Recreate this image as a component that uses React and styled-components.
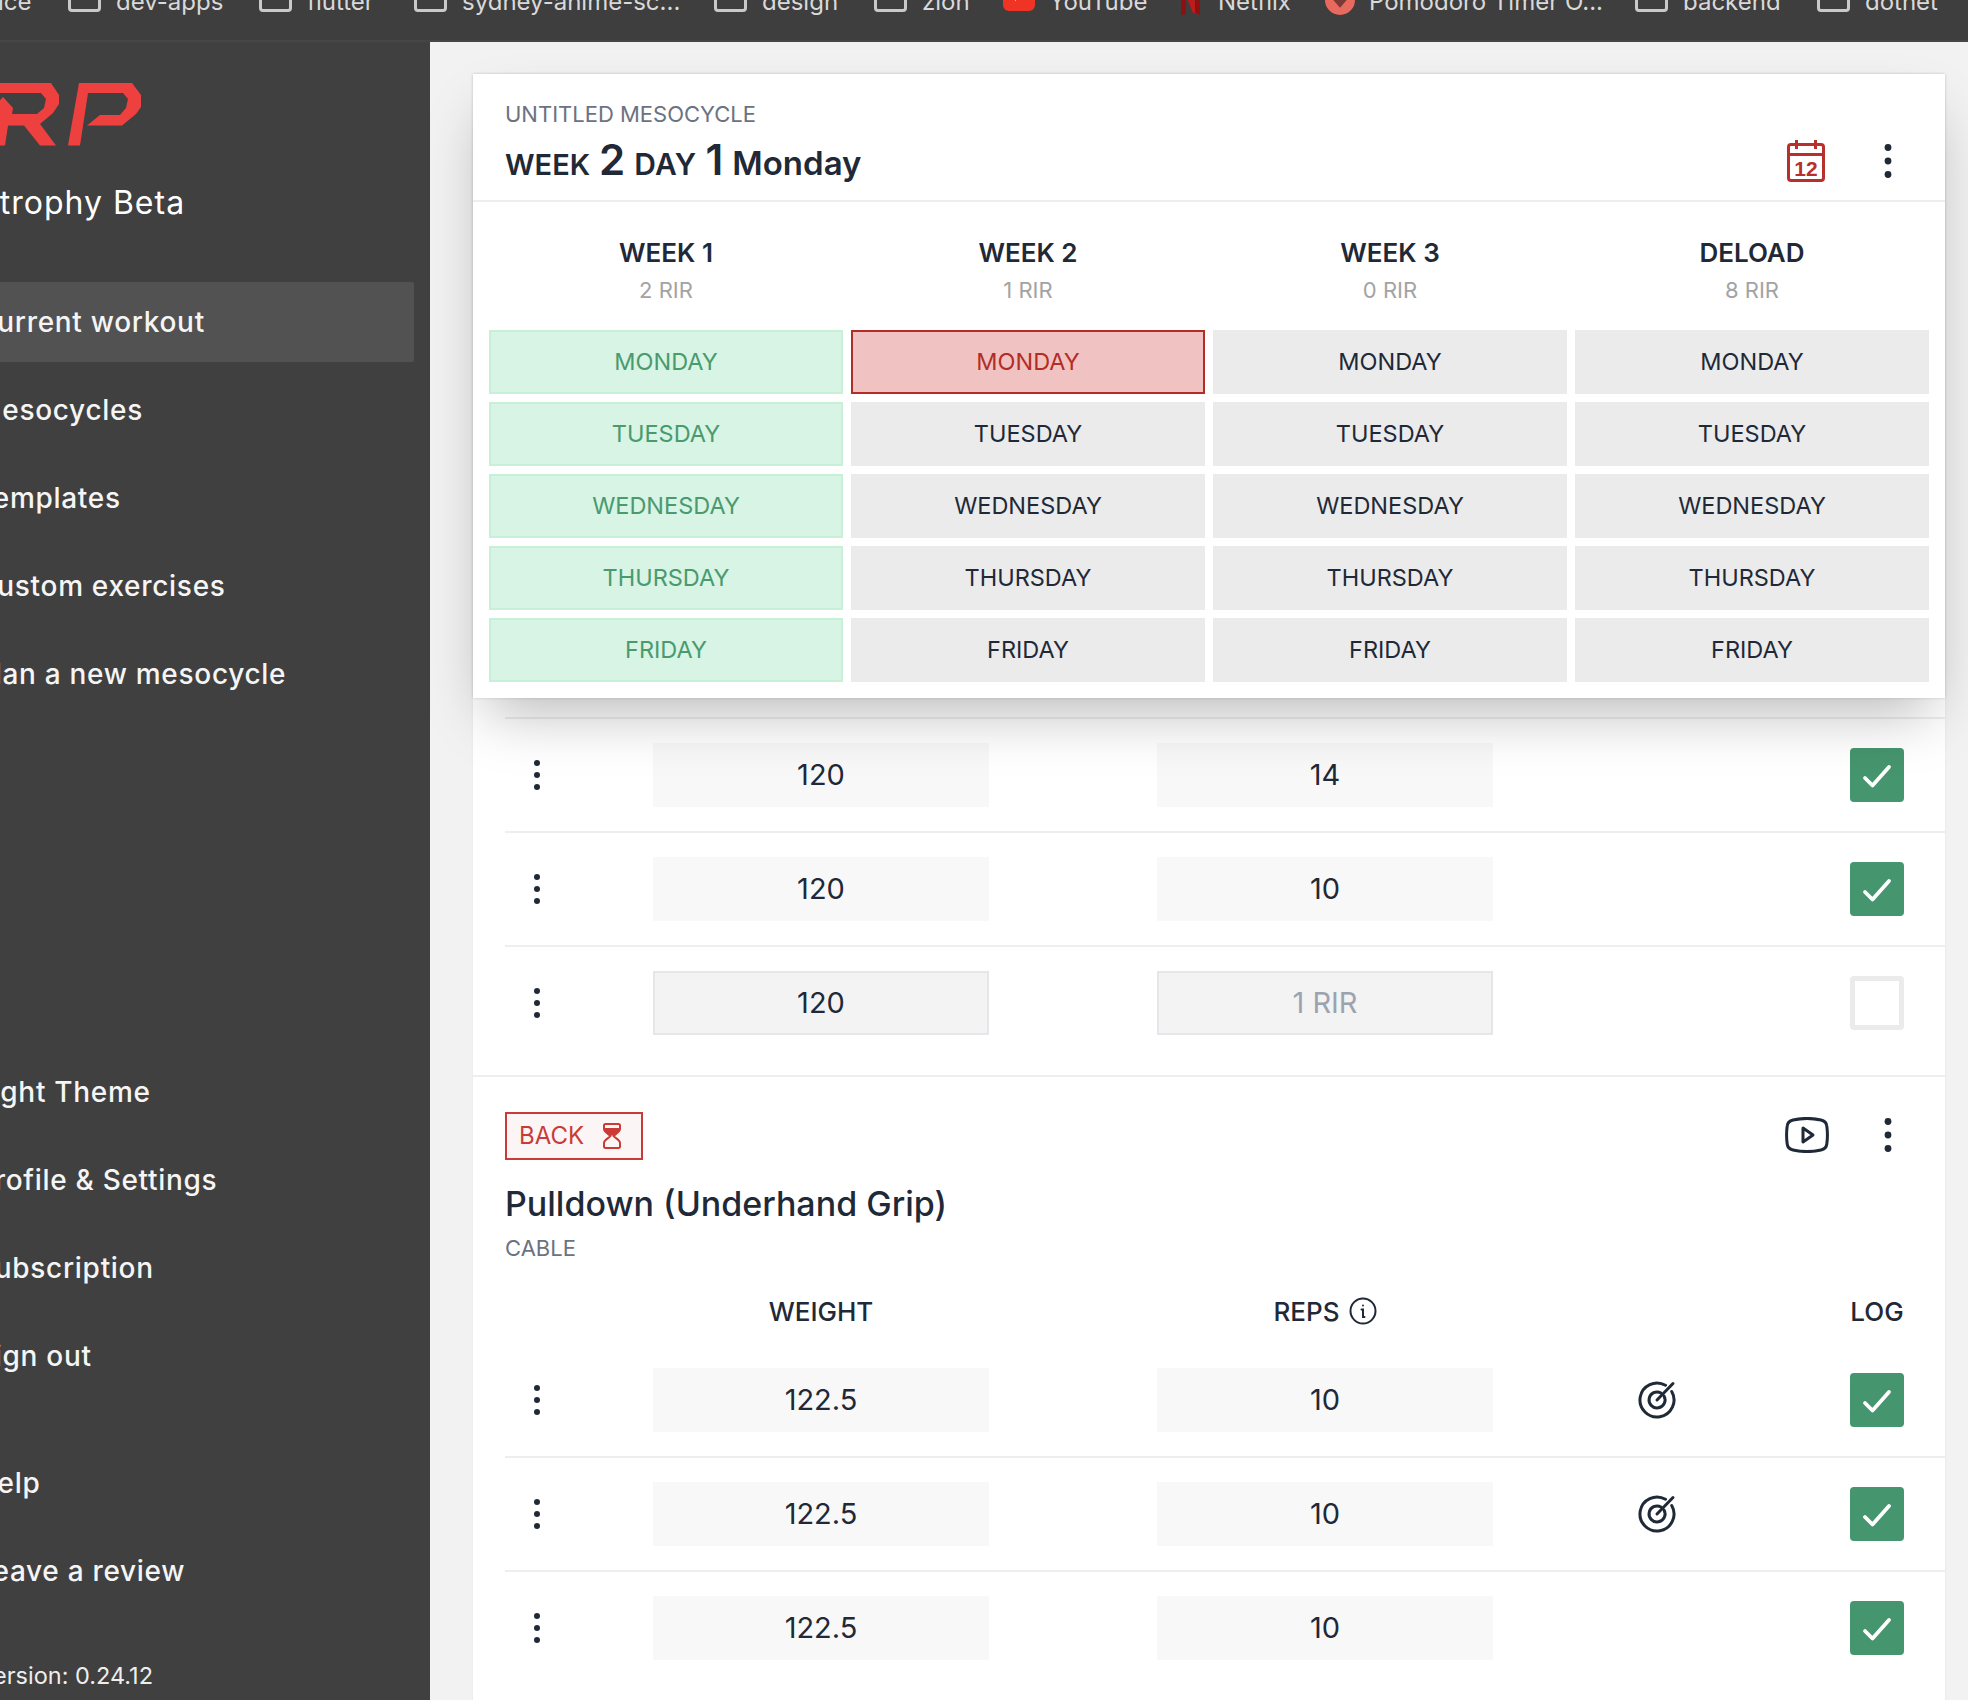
import React from "react";
import styled, { createGlobalStyle } from "styled-components";

const Global = createGlobalStyle`
  html, body { margin: 0; padding: 0; background: #f2f2f2; overflow: hidden; }
  * { box-sizing: border-box; }
  body { font-family: Inter, "Noto Sans", sans-serif; color: #1f2937; }
`;

const Page = styled.div`
  width: 1968px; height: 1700px; overflow: hidden;
  display: flex; flex-direction: column;
`;

/* ---------- bookmarks bar ---------- */
const TopBar = styled.div`
  height: 42px; flex: none; overflow: hidden;
  background: #3e3e3e; border-bottom: 2px solid #464646;
`;
const Bookmarks = styled.div`
  display: flex; align-items: flex-start; height: 32px;
  margin: -17px 0 0 -2px;
  font-size: 24px; line-height: 32px; color: #d9d9d9; white-space: nowrap;
`;
const Bookmark = styled.div`
  display: flex; align-items: flex-start; flex: none;
  width: ${(p) => p.$w}px;
`;
const BookmarkIcon = styled.div`
  flex: none; width: ${(p) => p.$w}px; margin-right: 15px; height: 29px;
`;
const BookmarkLabel = styled.span`
  padding-top: 3px;
`;
const Folder = styled.div`
  width: 33px; height: 29px;
  border: 3px solid #c9c9c9; border-radius: 4px;
`;

const Youtube = () => (
  <svg width="32" height="29" viewBox="0 0 32 29">
    <rect x="0" y="-6" width="32" height="34" rx="6" fill="#ef3324" />
    <path d="M12 10 L20 17 L12 24 Z" fill="#fff" transform="translate(0 -6)" />
  </svg>
);
const Netflix = () => (
  <svg width="22" height="32" viewBox="0 0 22 32">
    <path d="M1 0 H8 L20 32 L13 30 Z" fill="#c11a1a" />
    <path d="M1 0 H6 V31 L1 32 Z" fill="#8f1010" />
    <path d="M15 0 H20 V32 L15 30 Z" fill="#8f1010" />
  </svg>
);
const Pomodoro = () => (
  <svg width="30" height="32" viewBox="0 0 30 32">
    <circle cx="15" cy="17" r="15" fill="#e8695e" />
    <path d="M9 14 L15 21 L21 14" fill="none" stroke="#7a3a36" strokeWidth="5" />
  </svg>
);

/* ---------- sidebar ---------- */
const Layout = styled.div`
  flex: 1; display: flex; min-height: 0;
`;
const Sidebar = styled.aside`
  width: 430px; flex: none; background: #404040; color: #fff; overflow: hidden;
  display: flex; flex-direction: column; padding-top: 41px;
`;
const LogoWrap = styled.div`
  height: 64px; flex: none;
  svg { display: block; margin-top: -1px; }
`;
const Product = styled.div`
  margin: 33px 0 0 -98px; font-size: 32px; line-height: 46px; white-space: nowrap;
  letter-spacing: 1px; height: 46px;
`;
const NavGroup = styled.nav`
  display: flex; flex-direction: column; gap: 8px;
  margin-top: ${(p) => p.$top}px; width: 414px;
`;
const NavItem = styled.div`
  height: 80px; display: flex; align-items: center;
  font-size: 28px; font-weight: 500; letter-spacing: 0.7px; white-space: nowrap; color: #f5f5f5;
  background: ${(p) => (p.$active ? "#525252" : "transparent")};
  border-radius: 0 2px 2px 0;
`;
const NavText = styled.span`
  margin-left: -24px;
`;
const Version = styled.div`
  margin: 47px 0 0 -22px; font-size: 23.5px; line-height: 36px; color: #eee; white-space: nowrap;
`;

/* ---------- main ---------- */
const Main = styled.main`
  flex: 1; min-width: 0; background: #f2f2f2; padding: 32px 23px 0 43px; overflow: hidden;
`;
const Card = styled.div`
  background: #fff; min-height: 1700px;
  box-shadow: 0 0 3px rgba(0,0,0,.06);
`;
const Sticky = styled.div`
  position: relative; z-index: 2; background: #fff;
  box-shadow: 0 28px 56px -14px rgba(0,0,0,.28), 0 0 3px rgba(0,0,0,.14);
`;
const StickyHead = styled.header`
  height: 128px; border-bottom: 2px solid #eeeeee;
  display: flex; align-items: flex-end; justify-content: space-between;
  padding: 0 32px 11px;
`;
const Kicker = styled.div`
  font-size: 22px; line-height: 30px; color: #6b7280;
`;
const Heading = styled.h1`
  margin: 7px 0 0; font-weight: 600; color: #1f2937; line-height: 48px;
  display: flex; align-items: baseline; gap: 9px;
`;
const HeadingPart = styled.span`
  font-size: ${(p) => p.$size}px;
  letter-spacing: ${(p) => p.$track ?? 0}px;
`;
const HeadActions = styled.div`
  display: flex; align-items: center; gap: 58px; padding-right: 20px; padding-bottom: 7px;
`;
const WeekGrid = styled.div`
  display: grid; grid-template-columns: repeat(4, 354px); gap: 8px;
  padding: 28px 16px 16px;
`;
const WeekCol = styled.div`
  display: flex; flex-direction: column; gap: 8px;
`;
const WeekTitle = styled.div`
  text-align: center; height: 92px;
`;
const WeekName = styled.div`
  font-size: 26px; line-height: 45px; font-weight: 600; color: #1f2937;
`;
const Rir = styled.div`
  font-size: 22px; line-height: 30px; color: #a3a3a3;
`;
const variants = {
  done: "background:#d7f4e5;border:2px solid #c6f0d8;color:#4a9a6e;",
  active: "background:#f0c2c2;border:2px solid #b32d27;color:#b32d27;",
  idle: "background:#ebebeb;border:2px solid #ebebeb;color:#1f2937;",
};
const DayCell = styled.div`
  height: 64px; display: flex; align-items: center; justify-content: center;
  font-size: 23.5px; padding-bottom: 1px; ${(p) => variants[p.$kind]}
`;

const Section = styled.section`
  padding: ${(p) => p.$top}px 0 16px 32px;
  border-bottom: 2px solid #eeeeee;
`;
const SetRow = styled.div`
  display: grid; grid-template-columns: 148px 336px 168px 336px 328px 1fr 54px;
  align-items: center; padding: 24px 41px 24px 0;
  border-top: ${(p) => (p.$line ? "2px solid #eeeeee" : "none")};
`;
const DotsCell = styled.div`
  grid-column: 1; padding-left: 28px; display: flex;
`;
const Field = styled.div`
  grid-column: ${(p) => p.$col};
  height: 64px; display: flex; align-items: center; justify-content: center;
  font-size: 29px; padding-bottom: 1px; background: ${(p) => (p.$open ? "#f3f3f3" : "#f8f8f8")};
  border: 2px solid ${(p) => (p.$open ? "#e6e6ea" : "#f8f8f8")};
  color: ${(p) => (p.$muted ? "#9ca3af" : "#1f2937")};
`;
const TargetCell = styled.div`
  grid-column: 5; display: flex; justify-content: center;
`;
const LogBox = styled.div`
  grid-column: 7; width: 54px; height: 54px; border-radius: 4px;
  display: flex; align-items: center; justify-content: center;
  background: ${(p) => (p.$on ? "#45956e" : "#fff")};
  border: ${(p) => (p.$on ? "none" : "5px solid #ebebeb")};
`;
const ExHead = styled.div`
  display: flex; align-items: center; justify-content: space-between;
  padding-right: 41px;
`;
const MuscleTag = styled.div`
  height: 48px; width: 138px; border: 2px solid #cb3b35; background: #fbf5f5;
  color: #cb3b35; font-size: 24px; display: flex; align-items: center; gap: 19px;
  padding: 0 0 1px 12px;
`;
const ExActions = styled.div`
  display: flex; align-items: center; gap: 54px; padding: 0 11px 2px 0;
`;
const ExName = styled.h2`
  margin: 22px 0 0; font-size: 34px; line-height: 44px; font-weight: 500; color: #1f2937;
`;
const ExType = styled.div`
  margin-top: 8px; font-size: 22px; line-height: 28px; color: #6b7280;
`;
const ColHeads = styled.div`
  display: grid; grid-template-columns: 148px 336px 168px 336px 328px 1fr 54px;
  margin: 30px 0 14px; padding-right: 41px; height: 38px; align-items: center;
  font-size: 26px; font-weight: 500; color: #1f2937;
`;
const ColHead = styled.div`
  grid-column: ${(p) => p.$col}; display: flex; align-items: center; justify-content: center; gap: 9px;
  white-space: nowrap;
`;

/* ---------- icons ---------- */
const Svg = styled.svg`
  display: block; flex: none;
`;
const Dots = ({ big }) => big ? (
  <Svg width="10" height="36" viewBox="0 0 10 36" fill="#1f2937">
    <circle cx="5" cy="4.5" r="3.4" /><circle cx="5" cy="18" r="3.4" /><circle cx="5" cy="31.5" r="3.4" />
  </Svg>
) : (
  <Svg width="8" height="32" viewBox="0 0 8 32" fill="#1f2937">
    <circle cx="4" cy="4" r="3" /><circle cx="4" cy="16" r="3" /><circle cx="4" cy="28" r="3" />
  </Svg>
);
const Check = () => (
  <Svg width="54" height="54" viewBox="0 0 54 54" fill="none" stroke="#fff" strokeWidth="3.8" strokeLinecap="round" strokeLinejoin="round">
    <path d="M15 30 L22.5 37.5 L39 19" />
  </Svg>
);
const Target = () => (
  <Svg width="40" height="40" viewBox="0 0 40 40" fill="none" stroke="#1f2937" strokeWidth="3" strokeLinecap="round">
    <path d="M28.5 5.3 A17 17 0 1 0 34.7 11.5" />
    <path d="M24 13 A8 8 0 1 0 27 16" />
    <path d="M20 20 L36 3.5" />
  </Svg>
);
const Calendar = () => (
  <Svg width="38" height="42" viewBox="0 0 38 42" fill="none" stroke="#b7312c" strokeWidth="3">
    <rect x="1.5" y="4.5" width="35" height="36" rx="2.5" />
    <path d="M1.5 14.5 H36.5" />
    <path d="M9.5 0 V9 M28.5 0 V9" />
    <text x="19" y="35.5" textAnchor="middle" fontFamily="Liberation Sans, sans-serif" fontWeight="700" fontSize="21" fill="#b7312c" stroke="none">12</text>
  </Svg>
);
const Hourglass = () => (
  <Svg width="18" height="26" viewBox="0 0 18 26">
    <path d="M1 2 A1.5 1.5 0 0 1 2.5 1 H15.5 A1.5 1.5 0 0 1 17 2 V6 C17 9 12 11 10.5 13 C12 15 17 17 17 20 V24 A1.5 1.5 0 0 1 15.5 25 H2.5 A1.5 1.5 0 0 1 1 24 V20 C1 17 6 15 7.5 13 C6 11 1 9 1 6 Z" fill="#fbf5f5" stroke="#cb3b35" strokeWidth="2" />
    <path d="M1 5 H17 V6.5 C17 9 11 11 9 13 C7 11 1 9 1 6.5 Z" fill="#cb3b35" />
  </Svg>
);
const Play = () => (
  <Svg width="44" height="36" viewBox="0 0 44 36" fill="none" stroke="#1f2937" strokeWidth="3" strokeLinejoin="round">
    <path d="M8 3 C16 1.2 28 1.2 36 3 C39.5 3.8 41.5 6 41.8 9 C42.5 14 42.5 22 41.8 27 C41.5 30 39.5 32.2 36 33 C28 34.8 16 34.8 8 33 C4.5 32.2 2.5 30 2.2 27 C1.5 22 1.5 14 2.2 9 C2.5 6 4.5 3.8 8 3 Z" />
    <path d="M18 11 L28 18 L18 25 Z" />
  </Svg>
);
const Info = () => (
  <Svg width="28" height="28" viewBox="0 0 28 28" fill="none" stroke="#1f2937" strokeWidth="2" strokeLinecap="round">
    <circle cx="14" cy="14" r="12.5" />
    <circle cx="14" cy="8.5" r="1" fill="#1f2937" stroke="none" />
    <path d="M12.5 12.5 H14 V20 H15.5" />
  </Svg>
);
const Logo = () => (
  <svg width="160" height="90" viewBox="0 0 160 90" fill="#ef4040" fillRule="evenodd" style={{ marginTop: -12 }}>
    <path d="M-10 12 L51 12 L59 24 L59 33 L53 42 L40 53 L56 74.5 L40 74.5 L24 54.5 L8 54.5 L5 74.5 L-10 74.5 Z M-10 22 L41 22 L46 28 L44 37 L37 43 L12 43 L13 37 L3 26 L-10 40 Z" />
    <path d="M79 12 L132 12 L141 24 L141 36 L136 43 L122 54.5 L87 54.5 L100 44 L120 44 L126 37 L128 28 L123 22 L88 22 L80 74.5 L68 74.5 Z" />
  </svg>
);

const bookmarks = [
  { w: 70, text: "ice", skip: true },
  { w: 191, text: "dev-apps" },
  { w: 155, text: "flutter" },
  { w: 300, text: "sydney-anime-sc..." },
  { w: 160, text: "design" },
  { w: 129, text: "zion" },
  { w: 177, text: "YouTube", icon: <Youtube />, iw: 31 },
  { w: 145, text: "Netflix", icon: <Netflix />, iw: 23 },
  { w: 310, text: "Pomodoro Timer O...", icon: <Pomodoro />, iw: 29 },
  { w: 182, text: "backend" },
  { w: 140, text: "dotnet" },
];

const weeks = [
  { name: "WEEK 1", rir: "2 RIR", kind: () => "done" },
  { name: "WEEK 2", rir: "1 RIR", kind: (i) => (i === 0 ? "active" : "idle") },
  { name: "WEEK 3", rir: "0 RIR", kind: () => "idle" },
  { name: "DELOAD", rir: "8 RIR", kind: () => "idle" },
];
const days = ["MONDAY", "TUESDAY", "WEDNESDAY", "THURSDAY", "FRIDAY"];

const Row = ({ weight, reps, on = true, open, target, line = true, muted }) => (
  <SetRow $line={line}>
    <DotsCell><Dots /></DotsCell>
    <Field $col={2} $open={open}>{weight}</Field>
    <Field $col={4} $open={open} $muted={muted}>{reps}</Field>
    {target && <TargetCell><Target /></TargetCell>}
    <LogBox $on={on}>{on && <Check />}</LogBox>
  </SetRow>
);

export default function App() {
  return (
    <Page>
      <Global />
      <TopBar>
        <Bookmarks>
          {bookmarks.map((b) => (
            <Bookmark key={b.text} $w={b.w}>
              {!b.skip && <BookmarkIcon $w={b.iw ?? 33}>{b.icon || <Folder />}</BookmarkIcon>}
              <BookmarkLabel>{b.text}</BookmarkLabel>
            </Bookmark>
          ))}
        </Bookmarks>
      </TopBar>
      <Layout>
        <Sidebar>
          <LogoWrap><Logo /></LogoWrap>
          <Product>Hypertrophy Beta</Product>
          <NavGroup $top={56}>
            <NavItem $active><NavText>Current workout</NavText></NavItem>
            <NavItem><NavText>Mesocycles</NavText></NavItem>
            <NavItem><NavText>Templates</NavText></NavItem>
            <NavItem><NavText>Custom exercises</NavText></NavItem>
            <NavItem><NavText>Plan a new mesocycle</NavText></NavItem>
          </NavGroup>
          <NavGroup $top={338}>
            <NavItem><NavText>Light Theme</NavText></NavItem>
            <NavItem><NavText>Profile &amp; Settings</NavText></NavItem>
            <NavItem><NavText>Subscription</NavText></NavItem>
            <NavItem><NavText>Sign out</NavText></NavItem>
          </NavGroup>
          <NavGroup $top={47}>
            <NavItem><NavText>Help</NavText></NavItem>
            <NavItem><NavText>Leave a review</NavText></NavItem>
          </NavGroup>
          <Version>Version: 0.24.12</Version>
        </Sidebar>
        <Main>
          <Card>
            <Sticky>
              <StickyHead>
                <div>
                  <Kicker>UNTITLED MESOCYCLE</Kicker>
                  <Heading>
                    <HeadingPart $size={29}>WEEK</HeadingPart>
                    <HeadingPart $size={42}>2</HeadingPart>
                    <HeadingPart $size={30} $track={0.3}>DAY</HeadingPart>
                    <HeadingPart $size={42}>1</HeadingPart>
                    <HeadingPart $size={33}>Monday</HeadingPart>
                  </Heading>
                </div>
                <HeadActions>
                  <Calendar />
                  <Dots big />
                </HeadActions>
              </StickyHead>
              <WeekGrid>
                {weeks.map((w) => (
                  <WeekCol key={w.name}>
                    <WeekTitle>
                      <WeekName>{w.name}</WeekName>
                      <Rir>{w.rir}</Rir>
                    </WeekTitle>
                    {days.map((d, i) => (
                      <DayCell key={d} $kind={w.kind(i)}>{d}</DayCell>
                    ))}
                  </WeekCol>
                ))}
              </WeekGrid>
            </Sticky>
            <Section $top={19}>
              <Row weight="120" reps="14" />
              <Row weight="120" reps="10" />
              <Row weight="120" reps="1 RIR" on={false} open muted />
            </Section>
            <Section $top={35}>
              <ExHead>
                <MuscleTag>BACK <Hourglass /></MuscleTag>
                <ExActions>
                  <Play />
                  <Dots big />
                </ExActions>
              </ExHead>
              <ExName>Pulldown (Underhand Grip)</ExName>
              <ExType>CABLE</ExType>
              <ColHeads>
                <ColHead $col={2}>WEIGHT</ColHead>
                <ColHead $col={4}>REPS <Info /></ColHead>
                <ColHead $col={7}>LOG</ColHead>
              </ColHeads>
              <Row weight="122.5" reps="10" target line={false} />
              <Row weight="122.5" reps="10" target />
              <Row weight="122.5" reps="10" />
            </Section>
          </Card>
        </Main>
      </Layout>
    </Page>
  );
}
